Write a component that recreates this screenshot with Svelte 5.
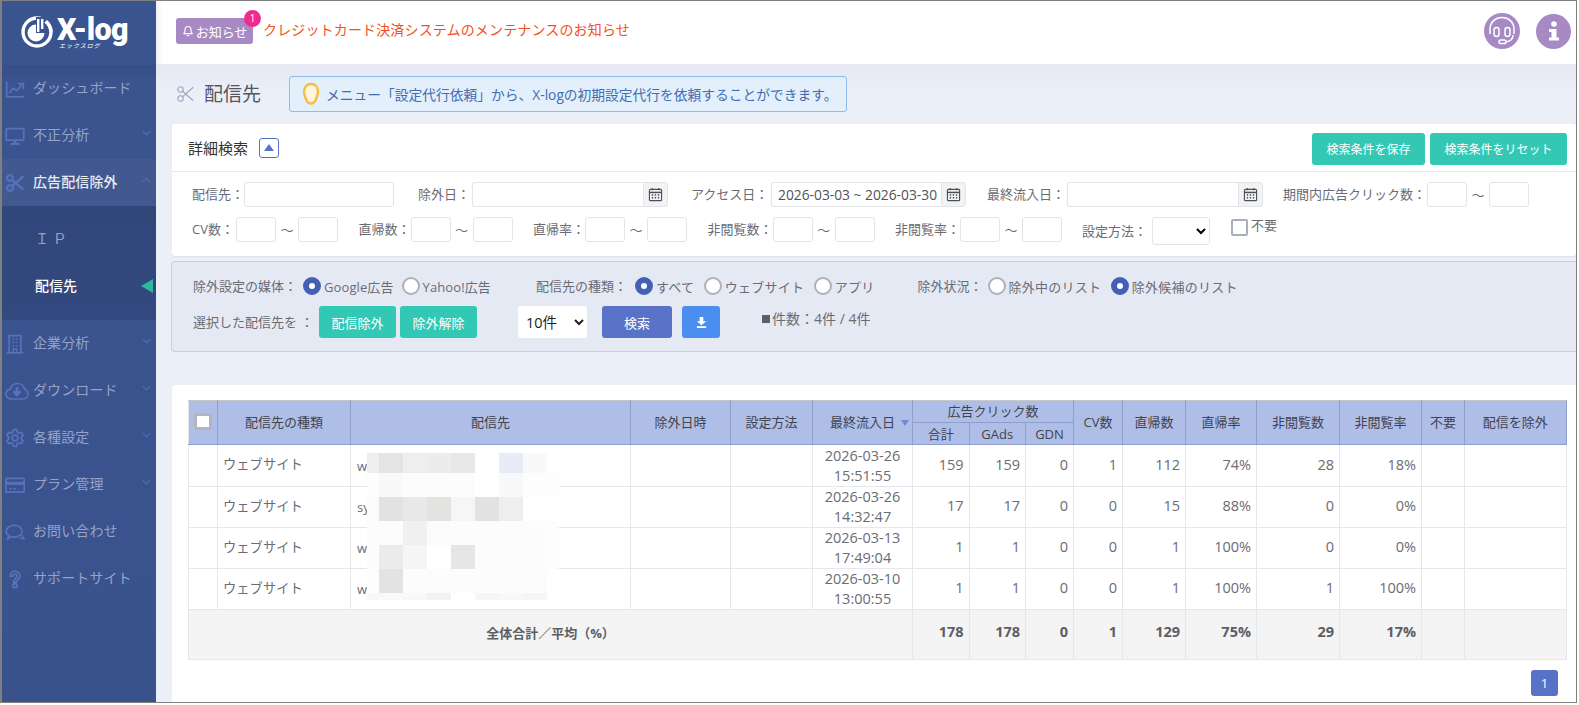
<script>
	const menuTop = [
		{ label: 'ダッシュボード', icon: 'chart' },
		{ label: '不正分析', icon: 'monitor', caret: 'down' },
		{ label: '広告配信除外', icon: 'scissors', caret: 'up', active: true }
	];
	const menuBottom = [
		{ label: '企業分析', icon: 'building', caret: 'down' },
		{ label: 'ダウンロード', icon: 'cloud', caret: 'down' },
		{ label: '各種設定', icon: 'gear', caret: 'down' },
		{ label: 'プラン管理', icon: 'card', caret: 'down' },
		{ label: 'お問い合わせ', icon: 'chat' },
		{ label: 'サポートサイト', icon: 'help' }
	];

	const columns = [29, 133, 280, 100, 82, 100, 56.5, 56.5, 48, 49, 63, 71, 83, 82, 43, 101.5];

	const rows = [
		{ site: 'w', date: '2026-03-26', time: '15:51:55', nums: ['159', '159', '0', '1', '112', '74%', '28', '18%'], tall: true },
		{ site: 'sy', date: '2026-03-26', time: '14:32:47', nums: ['17', '17', '0', '0', '15', '88%', '0', '0%'] },
		{ site: 'w', date: '2026-03-13', time: '17:49:04', nums: ['1', '1', '0', '0', '1', '100%', '0', '0%'] },
		{ site: 'w', date: '2026-03-10', time: '13:00:55', nums: ['1', '1', '0', '0', '1', '100%', '1', '100%'] }
	];
	const totals = ['178', '178', '0', '1', '129', '75%', '29', '17%'];

	// mosaic that hides the site names
	const mosaic = [
		['#eeeeee', '#e4e4e4', '#eeeeee', '#ececec', '#e8e8e8', '#ffffff', '#e9ecf6', '#f8f9fb', '#ffffff'],
		['#fdfdfd', '#f9f9f9', '#fcfcfc', '#fcfcfc', '#fcfcfc', '#ffffff', '#f9f9f9', '#fdfdfd', '#fdfdfd'],
		['#fbfbfb', '#e2e2e2', '#e8e8e8', '#e3e3e2', '#f6f6f6', '#e2e2e2', '#eeeeee', '#ffffff', '#ffffff'],
		['#fcfcfc', '#fcfcfc', '#f0f0f0', '#fbfbfb', '#fcfcfc', '#fcfcfc', '#fcfcfc', '#fcfcfc', '#fdfdfd'],
		['#fcfcfc', '#ebebeb', '#f5f5f5', '#ffffff', '#e6e6e6', '#fcfcfc', '#fcfcfc', '#fcfcfc', '#fdfdfd'],
		['#fdfdfd', '#e3e3e3', '#fcfcfc', '#fcfcfc', '#fcfcfc', '#fcfcfc', '#fcfcfc', '#fcfcfc', '#ffffff'],
		['#f8f8f8', '#f9f9f9', '#f8f8f8', '#f3f3f3', '#ffffff', '#f5f5f5', '#f8f8f8', '#f5f5f5', '#ffffff']
	];
</script>

{#snippet menuIcon(name)}
	<svg class="menu-icon {name}" viewBox="0 0 24 24" fill="none" stroke="currentColor" stroke-width="2.1">
		{#if name === 'chart'}
			<path d="M2 3v18.500h21" /><path d="M5 17l5-6 4 3 7-8" /><path d="M15.500 5.500H22V12" />
		{:else if name === 'monitor'}
			<rect x="1.500" y="3" width="21" height="14" rx="1" /><path d="M12 17v4" stroke-width="3" /><path d="M6.500 21.500h11" stroke-width="2.400" />
		{:else if name === 'scissors'}
			<circle cx="6" cy="6" r="3.500" stroke-width="2.600" /><circle cx="6" cy="18" r="3.500" stroke-width="2.600" /><path d="M8.500 8.200L22 20M8.500 15.800L22 4" stroke-width="2.600" />
		{:else if name === 'building'}
			<path d="M5 22V2h14v20M2 22.500h20" /><path d="M9 6h2M13 6h2M9 10h2M13 10h2M9 14h2M13 14h2M10 22v-4h4v4" stroke-width="1.800" />
		{:else if name === 'cloud'}
			<path d="M6.500 20C3.500 20 1 17.800 1 15c0-2.600 2-4.600 4.500-4.900C6.300 6.600 9 4.500 12.500 4.500c3.600 0 6.400 2.500 7 5.700 2.300.6 3.500 2.500 3.500 4.800 0 2.800-2.200 5-5 5z" stroke-width="1.700" />
			<path d="M12 8v7M8.500 12l3.500 4 3.500-4" stroke-width="2.600" />
		{:else if name === 'gear'}
			<circle cx="12" cy="12" r="3.500" />
			<path d="M10 2h4l.6 3 2.400 1.300 2.800-1 2 3.500-2.200 2 0 2.400 2.200 2-2 3.500-2.800-1L14.600 19 14 22h-4l-.6-3-2.400-1.300-2.800 1-2-3.500 2.200-2 0-2.400-2.200-2 2-3.500 2.800 1L9.400 5z" stroke-linejoin="round" />
		{:else if name === 'card'}
			<rect x="1" y="4" width="22" height="16.500" rx="1.500" /><path d="M1 10h22" stroke-width="3.800" /><path d="M5 16.500h3M10 16.500h3" stroke-width="2" />
		{:else if name === 'chat'}
			<path d="M11 4c5.300 0 9.500 3 9.500 7s-4.200 7-9.500 7c-1.300 0-2.500-.2-3.600-.5L3.500 20l1-3.400C2.600 15.300 1.500 13.300 1.500 11c0-4 4.200-7 9.500-7z" />
			<path d="M20.500 15.500c.3 2 1 3.500 2.500 4.500-2 .4-4 0-5.500-1.200" stroke-width="1.800" />
		{:else if name === 'help'}
			<path d="M6 8.500C6 5.200 8.700 2.500 12 2.500s6 2.700 6 6c0 3.800-4 4.200-4.200 7.500h-3.600c.2-4.500 4.300-5 4.300-7.500 0-1.400-1.100-2.500-2.500-2.500S9.500 7.100 9.500 8.500z" />
			<circle cx="12" cy="20" r="2.400" />
		{/if}
	</svg>
{/snippet}

{#snippet calendar()}
	<span class="cal-addon">
		<svg viewBox="0 0 16 16" width="15" height="15" fill="none" stroke="#4a4f5a" stroke-width="1.200">
			<rect x="1.500" y="2.500" width="13" height="12" rx="1" /><path d="M1.500 5.800h13" stroke-width="1.600" /><path d="M4.500 1v2.500M11.500 1v2.500" />
			<path d="M4 8.500h1.500M7.200 8.500h1.500M10.500 8.500H12M4 11.500h1.500M7.200 11.500h1.500M10.500 11.500H12" stroke-width="1.500" />
		</svg>
	</span>
{/snippet}

{#snippet range()}
	<input class="field num" /><span class="tilde">～</span><input class="field num" />
{/snippet}

{#snippet radio(checked, label, wide = false)}
	<span class="radio" class:checked></span><span class="radio-label" class:wide>{label}</span>
{/snippet}

<div class="frame">
	<aside class="sidebar">
		<div class="logo">
			<svg class="logo-mark" viewBox="0 0 32 32" width="32" height="32">
				<circle cx="16" cy="16" r="14" fill="none" stroke="#fff" stroke-width="3.400" />
				<circle cx="15" cy="17" r="8.500" fill="#fff" />
				<rect x="15" y="1" width="11" height="16" fill="#3b5490" />
				<rect x="16" y="3" width="2.400" height="13" fill="#fff" />
				<rect x="20" y="3" width="2.400" height="10" fill="#fff" />
				<path d="M24.500 5.500a14 14 0 0 1 5.500 10.500" fill="none" stroke="#fff" stroke-width="3.400" />
			</svg>
			<div class="logo-text">
				<span class="logo-name">X-log</span>
				<span class="logo-kana">エックスログ</span>
			</div>
		</div>
		<nav>
			{#each menuTop as item}
				<div class="menu-item" class:active={item.active}>
					{@render menuIcon(item.icon)}
					<span class="menu-label">{item.label}</span>
					{#if item.caret}
						<svg class="caret" viewBox="0 0 10 6" width="9" height="6"><path d={item.caret === 'down' ? 'M1 1l4 4 4-4' : 'M1 5l4-4 4 4'} fill="none" stroke="currentColor" stroke-width="1.200" /></svg>
					{/if}
				</div>
			{/each}
			<div class="submenu">
				<div class="sub-item">Ｉ Ｐ</div>
				<div class="sub-item current">配信先<span class="pointer"></span></div>
			</div>
			{#each menuBottom as item}
				<div class="menu-item">
					{@render menuIcon(item.icon)}
					<span class="menu-label">{item.label}</span>
					{#if item.caret}
						<svg class="caret" viewBox="0 0 10 6" width="9" height="6"><path d="M1 1l4 4 4-4" fill="none" stroke="currentColor" stroke-width="1.200" /></svg>
					{/if}
				</div>
			{/each}
		</nav>
	</aside>

	<main class="main">
		<header class="topbar">
			<span class="notice-tag">
				<svg viewBox="0 0 16 16" width="12" height="12" fill="none" stroke="#fff" stroke-width="1.500"><path d="M8 2c-2.500 0-4 2-4 4.500 0 3-1.500 4.500-1.500 5h11c0-.5-1.500-2-1.500-5C12 4 10.500 2 8 2z" /><path d="M6.500 13.500c.3 1 2.700 1 3 0" /></svg>
				お知らせ
				<span class="notice-count">1</span>
			</span>
			<span class="notice-text">クレジットカード決済システムのメンテナンスのお知らせ</span>
			<div class="top-icons">
				<span class="round-icon big">
					<svg viewBox="0 0 36 36" width="36" height="36" fill="none" stroke="#fff" stroke-width="1.500">
						<path d="M6 21v-5C6 9 11.500 4.500 18 4.500S30 9 30 16v5" />
						<rect x="10" y="14.500" width="5" height="9" rx="2.500" /><rect x="21" y="14.500" width="5" height="9" rx="2.500" />
						<path d="M29 22c0 4.500-3 6.500-7 6.800" /><rect x="15" y="27" width="7" height="3.600" rx="1.800" />
					</svg>
				</span>
				<span class="round-icon">
					<svg viewBox="0 0 14 20" width="14" height="20" fill="#fff"><circle cx="7" cy="3" r="2.800" /><path d="M2 8h7.500v8.500H12V19.500H2v-3h2.500V11H2z" /></svg>
				</span>
			</div>
		</header>

		<div class="content">
			<div class="page-head">
				<svg class="title-icon" viewBox="0 0 24 24" fill="none" stroke="#98a2b8" stroke-width="1.400"><circle cx="6" cy="6" r="3.600" /><circle cx="6" cy="18" r="3.600" /><path d="M8.600 8.200L23 21M8.600 15.800L23 3" /></svg>
				<h1>配信先</h1>
				<div class="info">
					<svg viewBox="0 0 18 24" width="18" height="24" fill="#fff5dc" stroke="#f6bd45" stroke-width="2.400"><path d="M9 2c4 0 7 3 7 7.500 0 3-1 5-2 7.500-.8 2-1.500 4.500-5 4.500S4.800 19 4 17C3 14.500 2 12.500 2 9.500 2 5 5 2 9 2z" /></svg>
					<span>メニュー「設定代行依頼」から、X-logの初期設定代行を依頼することができます。</span>
				</div>
			</div>

			<section class="search-card">
				<div class="search-head">
					<span class="search-title">詳細検索</span>
					<span class="toggle"><i></i></span>
					<div class="head-buttons">
						<button class="teal save">検索条件を保存</button>
						<button class="teal reset">検索条件をリセット</button>
					</div>
				</div>
				<div class="search-body">
					<div class="form-row">
						<label class="l-dest">配信先：</label><input class="field dest" />
						<label class="l-excl">除外日：</label><span class="date excl"><input class="field" />{@render calendar()}</span>
						<label class="l-access">アクセス日：</label><span class="date access"><input class="field" value="2026-03-03 ~ 2026-03-30" />{@render calendar()}</span>
						<label class="l-last">最終流入日：</label><span class="date last"><input class="field" />{@render calendar()}</span>
						<label class="l-click">期間内広告クリック数：</label>{@render range()}
					</div>
					<div class="form-row second">
						<label class="l-cv">CV数：</label>{@render range()}
						<label class="l-n">直帰数：</label>{@render range()}
						<label class="l-n">直帰率：</label>{@render range()}
						<label class="l-m">非閲覧数：</label>{@render range()}
						<label class="l-m">非閲覧率：</label>{@render range()}
						<label class="l-method">設定方法：</label>
						<select class="method"><option></option></select>
						<span class="check"></span><span class="check-label">不要</span>
					</div>
				</div>
			</section>

			<section class="action-panel">
				<div class="action-row">
					<span class="a-media">除外設定の媒体：</span>
					{@render radio(true, 'Google広告')}
					{@render radio(false, 'Yahoo!広告')}
					<span class="a-kind">配信先の種類：</span>
					{@render radio(true, 'すべて', true)}
					{@render radio(false, 'ウェブサイト', true)}
					{@render radio(false, 'アプリ', true)}
					<span class="a-state">除外状況：</span>
					{@render radio(false, '除外中のリスト', true)}
					{@render radio(true, '除外候補のリスト', true)}
				</div>
				<div class="action-row buttons">
					<span class="a-selected">選択した配信先を ：</span>
					<button class="teal act">配信除外</button>
					<button class="teal act">除外解除</button>
					<select class="per-page"><option>10件</option></select>
					<button class="search-btn">検索</button>
					<button class="dl-btn" aria-label="ダウンロード">
						<svg viewBox="0 0 12 12" width="11" height="11" fill="#fff"><path d="M4 0h4v4.500h3L6 9 1 4.500h3z" /><rect x="1" y="10" width="10" height="2" /></svg>
					</button>
					<span class="count"><i></i>件数：4件 / 4件</span>
				</div>
			</section>

			<section class="table-card">
				<div class="table-wrap">
					<table>
						<colgroup>
							{#each columns as w}<col style:width="{w}px" />{/each}
						</colgroup>
						<thead>
							<tr class="head-top">
								<th rowspan="2"><span class="th-check"></span></th>
								<th rowspan="2">配信先の種類</th>
								<th rowspan="2">配信先</th>
								<th rowspan="2">除外日時</th>
								<th rowspan="2">設定方法</th>
								<th rowspan="2" class="sortable">最終流入日<i class="sort"></i></th>
								<th colspan="3">広告クリック数</th>
								<th rowspan="2">CV数</th>
								<th rowspan="2">直帰数</th>
								<th rowspan="2">直帰率</th>
								<th rowspan="2">非閲覧数</th>
								<th rowspan="2">非閲覧率</th>
								<th rowspan="2">不要</th>
								<th rowspan="2">配信を除外</th>
							</tr>
							<tr class="head-sub">
								<th>合計</th>
								<th>GAds</th>
								<th>GDN</th>
							</tr>
						</thead>
						<tbody>
							{#each rows as row}
								<tr class:tall={row.tall}>
									<td></td>
									<td class="kind">ウェブサイト</td>
									<td class="site">{row.site}</td>
									<td></td>
									<td></td>
									<td class="when">{row.date}<br />{row.time}</td>
									{#each row.nums as n}<td class="num-cell">{n}</td>{/each}
									<td></td>
									<td></td>
								</tr>
							{/each}
						</tbody>
						<tfoot>
							<tr>
								<td colspan="6" class="total-label">全体合計／平均（%）</td>
								{#each totals as n}<td class="num-cell">{n}</td>{/each}
								<td></td>
								<td></td>
							</tr>
						</tfoot>
					</table>
					<div class="mosaic" aria-hidden="true">
						{#each mosaic as line}
							{#each line as c}<span style:background={c}></span>{/each}
						{/each}
					</div>
				</div>
				<div class="pager"><span>1</span></div>
			</section>
		</div>
	</main>
</div>

<style>
	:global(body) {
		margin: 0;
		background: #fff;
		font-family: "Open Sans", "Noto Sans CJK JP", sans-serif;
		color: #6a6c75;
	}

	.frame {
		box-sizing: border-box;
		display: flex;
		width: 1577px;
		height: 703px;
		border: solid #808080;
		border-width: 1px 1px 1px 2px;
		overflow: hidden;
		background: #ebeff8;
	}

	/* sidebar */
	.sidebar {
		flex: 0 0 154px;
		background: linear-gradient(180deg, #3b5490 0%, #3a528c 100%);
		color: #8f9fc6;
		font-size: 14px;
	}

	.logo {
		display: flex;
		align-items: flex-start;
		gap: 4px;
		height: 64px;
		box-sizing: border-box;
		padding: 15px 0 0 19px;
		background: #3a5490;
	}

	.logo-text {
		display: flex;
		flex-direction: column;
		align-items: flex-start;
		padding-top: 1px;
		color: #fff;
	}

	.logo-name {
		font: 900 30.5px/26px "Roboto", sans-serif;
		letter-spacing: -0.6px;
	}

	.logo-kana {
		font-size: 6px;
		line-height: 6px;
		letter-spacing: 1px;
		font-style: italic;
		margin-left: 2px;
	}

	.menu-item {
		position: relative;
		display: flex;
		align-items: center;
		height: 47px;
		padding-left: 3px;
		font-size: 14px;
		color: #94a3c8;
	}

	.menu-label {
		margin-bottom: 4px;
		letter-spacing: 0.1px;
	}

	nav > .menu-item:first-child {
		background: linear-gradient(180deg, #374e86 0%, #3b5490 40%);
	}

	.menu-item.active {
		background: #41598f;
		color: #e6eaf4;
		font-weight: 500;
	}

	.menu-icon {
		flex: 0 0 20px;
		width: 20px;
		height: 20px;
		margin-right: 8px;
		color: #5672bc;
	}

	.menu-icon.cloud {
		flex-basis: 24px;
		width: 24px;
		height: 24px;
		margin-right: 4px;
	}

	.caret {
		position: absolute;
		right: 5px;
		top: 18px;
		color: #5672bc;
	}

	.submenu {
		height: 114px;
		background: linear-gradient(180deg, #314679 0%, #33497f 100%);
		box-sizing: border-box;
		padding-top: 10px;
	}

	.sub-item {
		position: relative;
		height: 47px;
		line-height: 46px;
		padding-left: 33px;
		color: #94a3c8;
		font-size: 14px;
	}

	.sub-item.current {
		color: #fff;
		font-weight: 500;
	}

	.pointer {
		position: absolute;
		right: 3px;
		top: 16px;
		width: 0;
		height: 0;
		border: solid transparent;
		border-width: 7px 12px 7px 0;
		border-right-color: #2db7a0;
	}

	/* top bar */
	.main {
		flex: 1;
		min-width: 0;
		display: flex;
		flex-direction: column;
	}

	.topbar {
		flex: 0 0 63px;
		display: flex;
		align-items: center;
		padding-left: 20px;
		box-sizing: border-box;
		background: #fff;
		box-shadow: inset 8px 0 8px -8px #e2e2e2;
	}

	.notice-tag {
		position: relative;
		display: flex;
		align-items: center;
		gap: 2px;
		justify-content: center;
		width: 77px;
		height: 26px;
		border-radius: 3px;
		background: #a78ac4;
		color: #fff;
		font-size: 13px;
		margin-top: -3px;
	}

	.notice-count {
		position: absolute;
		right: -8px;
		top: -8px;
		width: 17px;
		height: 17px;
		border-radius: 50%;
		background: #f12b8d;
		color: #fff;
		font-size: 10px;
		line-height: 17px;
		text-align: center;
	}

	.notice-text {
		margin-left: 10px;
		font-size: 14px;
		letter-spacing: 0.15px;
		color: #f4511e;
		margin-top: -8px;
	}

	.top-icons {
		margin-left: auto;
		display: flex;
		align-items: center;
		gap: 16px;
		padding-right: 5px;
	}

	.round-icon {
		display: flex;
		align-items: center;
		justify-content: center;
		width: 35px;
		height: 35px;
		border-radius: 50%;
		background: #a78ac4;
		margin-top: -3px;
	}

	.round-icon.big {
		width: 36px;
		height: 36px;
	}

	/* page */
	.content {
		flex: 1;
		min-height: 0;
		background: linear-gradient(180deg, #e5e8f3 0, #ebeff8 30px);
		padding-left: 16px;
	}

	.page-head {
		display: flex;
		align-items: center;
		height: 60px;
		box-sizing: border-box;
		padding: 0 0 0 4px;
	}

	.title-icon {
		width: 18px;
		height: 18px;
		margin-right: 10px;
	}

	h1 {
		margin: 0 28px 0 0;
		font-size: 19px;
		font-weight: 400;
		color: #55575f;
		line-height: 1;
	}

	.info {
		display: flex;
		align-items: center;
		gap: 6px;
		box-sizing: border-box;
		width: 558px;
		height: 36px;
		padding-left: 12px;
		background: #e3effb;
		border: 1px solid #8ebcf0;
		border-radius: 3px;
		color: #3e6db3;
		font-size: 13.75px;
		white-space: nowrap;
	}

	.info svg {
		flex: none;
	}

	.search-card {
		width: 1404px;
		height: 132px;
		background: #fff;
		border-radius: 3px;
		box-shadow: 0 1px 1px #dde0ea;
		font-size: 13px;
	}

	.search-head {
		display: flex;
		align-items: center;
		height: 48px;
		box-sizing: border-box;
		padding: 0 9px 0 16px;
		border-bottom: 1px solid #e9e9ee;
	}

	.search-title {
		font-size: 15px;
		color: #333;
		margin-top: -1px;
	}

	.toggle {
		display: flex;
		align-items: center;
		justify-content: center;
		width: 20px;
		height: 20px;
		margin-left: 11px;
		box-sizing: border-box;
		border: 1px solid #5872c8;
		border-radius: 3px;
	}

	.toggle i {
		width: 0;
		height: 0;
		border: solid transparent;
		border-width: 0 5px 7px;
		border-bottom-color: #5872c8;
	}

	.head-buttons {
		margin-left: auto;
		display: flex;
		gap: 5px;
		margin-top: 3px;
	}

	button {
		font-family: inherit;
		border: 0;
		padding: 0;
		color: #fff;
	}

	.teal {
		background: #32c8b4;
		border-radius: 3px;
		font-size: 13px;
	}

	.save {
		width: 113px;
		height: 32px;
		font-size: 12px;
	}

	.reset {
		width: 137px;
		height: 32px;
		font-size: 12px;
	}

	.search-body {
		padding-top: 10px;
	}

	.form-row {
		display: flex;
		align-items: flex-start;
		height: 35px;
		white-space: nowrap;
	}

	label,
	.action-row > span:not(.radio):not(.radio-label) {
		color: #6a6c75;
		line-height: 24px;
		font-size: 13px;
	}

	.field {
		box-sizing: border-box;
		height: 25px;
		border: 1px solid #e3e4e8;
		border-radius: 3px;
		background: #fff;
		padding: 0 6px;
		font: 13.8px/23px "Open Sans", sans-serif;
		color: #50525a;
		outline: 0;
	}

	.dest {
		width: 150px;
	}

	.num {
		width: 40px;
	}

	.tilde {
		width: 22px;
		text-align: center;
		line-height: 26px;
		font-size: 13px;
	}

	.date {
		display: flex;
	}

	.date .field {
		flex: 1;
		min-width: 0;
		border-radius: 3px 0 0 3px;
		border-right: 0;
	}

	.cal-addon {
		display: flex;
		align-items: center;
		justify-content: center;
		flex: 0 0 25px;
		height: 25px;
		box-sizing: border-box;
		border: 1px solid #e3e4e8;
		border-radius: 0 3px 3px 0;
		background: #f3f3f3;
	}

	.excl {
		width: 196px;
	}

	.access {
		width: 195px;
	}

	.access .field {
		padding: 0 2px 0 6px;
	}

	.last {
		width: 196px;
	}

	.l-dest {
		margin-left: 20px;
		width: 52px;
	}

	.l-excl {
		margin-left: 24px;
		width: 54px;
	}

	.l-access {
		margin-left: 23px;
		width: 80px;
	}

	.l-last {
		margin-left: 21px;
		width: 80px;
	}

	.l-click {
		margin-left: 20px;
		width: 144px;
	}

	.l-cv {
		margin-left: 20px;
		width: 44px;
	}

	.l-n {
		margin-left: 20.5px;
		width: 52px;
	}

	.l-m {
		margin-left: 20.5px;
		width: 65px;
	}

	.l-method {
		margin-left: 20px;
		width: 70px;
		padding-top: 2px;
	}

	.method {
		box-sizing: border-box;
		width: 58px;
		height: 28px;
		border: 1px solid #e3e4e8;
		border-radius: 3px;
		background: #fff;
		outline: 0;
	}

	.check {
		box-sizing: border-box;
		width: 17px;
		height: 17px;
		margin: 2px 3px 0 21px;
		border: 2px solid #a9aebb;
		border-radius: 2px;
		background: #fff;
	}

	.check-label {
		line-height: 17px;
		font-size: 13px;
	}

	/* action panel */
	.action-panel {
		box-sizing: border-box;
		width: 1405px;
		height: 91px;
		margin: 5px 0 0 -1px;
		padding: 14px 0 0 21px;
		background: #e5e9f4;
		border: 1px solid #c9cfe2;
		border-right: 0;
		border-radius: 4px 0 0 4px;
		font-size: 13px;
	}

	.action-row {
		display: flex;
		align-items: center;
		height: 20px;
		white-space: nowrap;
	}

	.radio {
		box-sizing: border-box;
		width: 18px;
		height: 18px;
		border: 2px solid #adb1bd;
		border-radius: 50%;
		background: #fff;
		margin-right: 3px;
	}

	.radio.checked {
		border: 6px solid #4460b6;
	}

	.radio-label {
		color: #6a6c75;
		margin-right: 8px;
		font-size: 13px;
		letter-spacing: 0.1px;
	}

	.radio-label.wide {
		margin-right: 9.5px;
		letter-spacing: 0.25px;
	}

	.a-media {
		margin-right: 6px;
	}

	.a-kind {
		margin-left: 37px;
		margin-right: 8px;
	}

	.a-state {
		margin-left: 33.5px;
		margin-right: 5px;
	}

	.action-row.buttons {
		height: 32px;
		margin-top: 10px;
	}

	.act {
		width: 77px;
		height: 32px;
		margin-left: 4px;
		font-size: 13px;
	}

	.a-selected {
		width: 122px;
	}

	.per-page {
		box-sizing: border-box;
		width: 69px;
		height: 32px;
		margin-left: 41px;
		border: 0;
		border-radius: 3px;
		background: #fff;
		color: #222;
		font: 14.5px "Open Sans", "Noto Sans CJK JP", sans-serif;
		padding-left: 4px;
		outline: 0;
	}

	.search-btn {
		width: 70px;
		height: 32px;
		margin-left: 15px;
		background: #5872c8;
		border-radius: 3px;
		font-size: 13px;
	}

	.dl-btn {
		display: flex;
		align-items: center;
		justify-content: center;
		width: 38px;
		height: 32px;
		margin-left: 10px;
		background: #4c8ef0;
		border-radius: 3px;
	}

	.action-row > span.count:not(.radio):not(.radio-label) {
		display: flex;
		align-items: center;
		margin-left: 42px;
		margin-top: -6px;
		font-size: 14px;
	}

	.count i {
		width: 8px;
		height: 8px;
		margin-right: 2px;
		background: #5a5f70;
	}

	/* table */
	.table-card {
		width: 1404px;
		height: 320px;
		margin-top: 33px;
		background: #fff;
		border-radius: 4px 0 0 0;
		font-size: 14.5px;
	}

	.table-wrap {
		position: relative;
		padding: 15px 0 0 16px;
	}

	table {
		table-layout: fixed;
		width: 1378px;
		border-collapse: collapse;
	}

	th {
		background: #afbee6;
		color: #3f4450;
		font-weight: 400;
		font-size: 13px;
		border: 1px solid #8f9fcb;
		border-top-color: #c8c8c8;
		padding: 0;
	}

	thead tr:first-child th:first-child {
		border-left-color: #e3e4e8;
	}

	.head-top {
		height: 22px;
	}

	.head-top th {
		padding-bottom: 2px;
	}

	.head-sub {
		height: 22px;
	}

	.th-check {
		display: block;
		box-sizing: border-box;
		width: 18px;
		height: 17px;
		margin: 0 auto;
		background: #fff;
		border: 3px solid #b2b5bd;
		border-radius: 2px;
	}

	.sortable {
		position: relative;
	}

	.sort {
		position: absolute;
		right: 3px;
		top: 19px;
		width: 0;
		height: 0;
		border: solid transparent;
		border-width: 6px 4.500px 0;
		border-top-color: #6f8ad8;
	}

	td {
		border: 1px solid #e6e7ec;
		padding: 0 5px;
		color: #6a6c75;
		height: 41px;
		box-sizing: border-box;
	}

	tr.tall td {
		height: 42px;
	}

	.kind {
		font-size: 13.3px;
		padding-bottom: 4px;
	}

	.site {
		padding-left: 6px;
		font-size: 13px;
	}

	.when {
		text-align: center;
		line-height: 20px;
		padding: 0;
	}

	.num-cell {
		text-align: right;
		padding-bottom: 3px;
	}

	tfoot td {
		height: 50px;
		background: #f4f4f4;
		font-weight: 700;
		font-size: 14.5px;
		color: #5c5e66;
	}

	tfoot .num-cell {
		padding-bottom: 7px;
	}

	tfoot .total-label {
		text-align: center;
		font-size: 13px;
		padding: 0 0 4px;
	}

	.mosaic {
		position: absolute;
		left: 195px;
		top: 68px;
		width: 192px;
		height: 147px;
		display: grid;
		grid-template-columns: 12px repeat(7, 24px) 12px;
		grid-template-rows: 20px repeat(5, 24px) 7px;
	}

	.pager {
		display: flex;
		justify-content: flex-end;
		padding: 10px 18px 0 0;
	}

	.pager span {
		width: 27px;
		height: 26px;
		border-radius: 3px;
		background: #5872c8;
		color: #fff;
		font-size: 13px;
		line-height: 26px;
		text-align: center;
	}
</style>
